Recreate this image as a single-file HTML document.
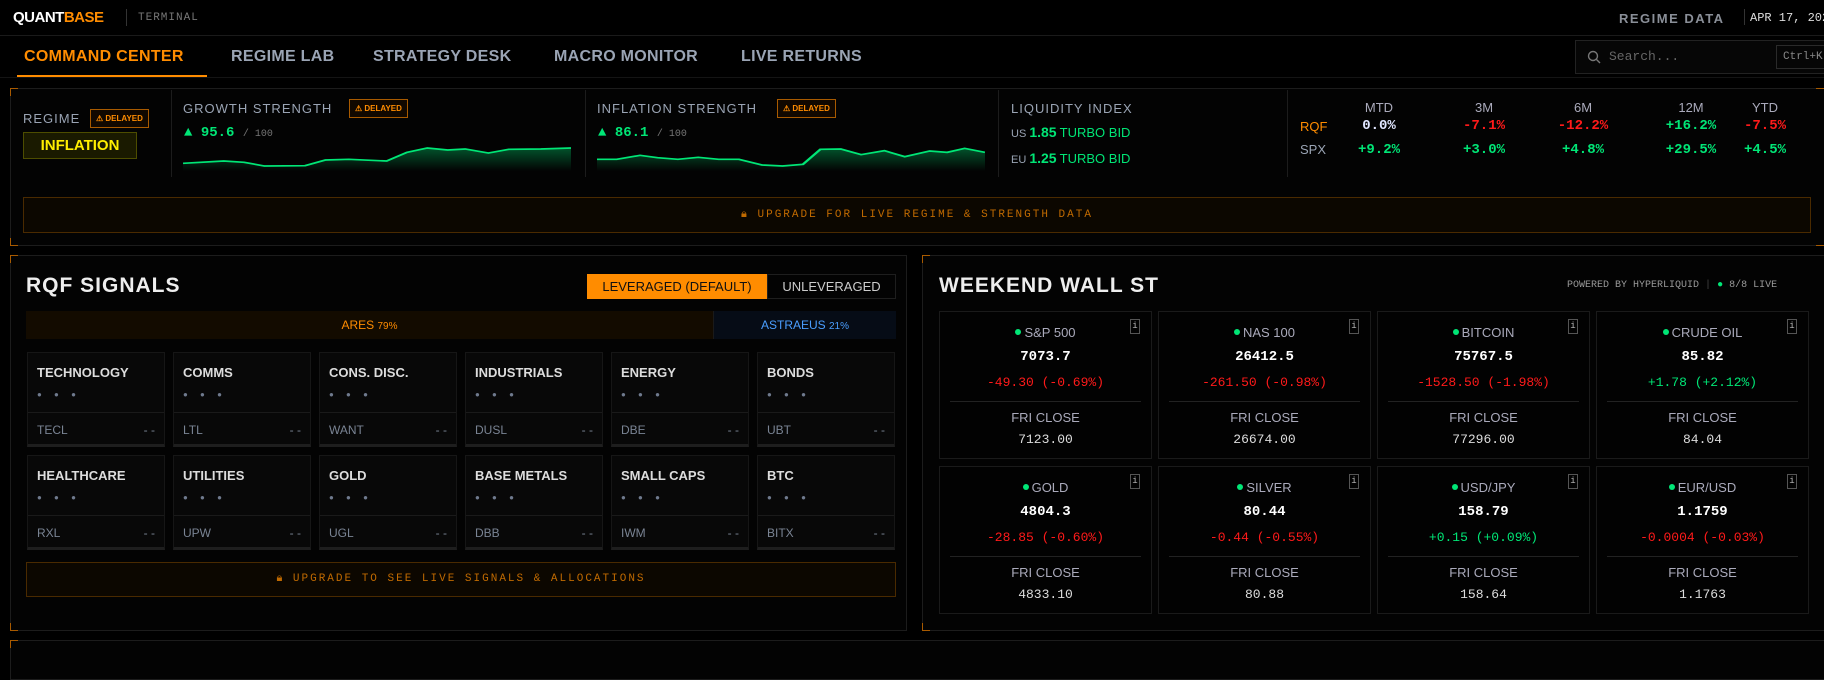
<!DOCTYPE html>
<html><head><meta charset="utf-8"><style>
*{box-sizing:border-box;margin:0;padding:0}
body{width:1824px;height:650px;overflow:hidden;background:#000;font-family:"Liberation Sans",sans-serif;color:#ddd;position:relative}
.a{position:absolute;white-space:nowrap}
.mono{font-family:"Liberation Mono",monospace}
.b{font-weight:bold}
.g{color:#00e676}.r{color:#ff1a1a}.o{color:#ff8c00}
.nav{top:48px;font-size:16px;font-weight:bold;color:#9aa4b4;letter-spacing:.3px}
.badge{border:1px solid #a85a00;color:#ff8c00;font-size:8px;font-weight:bold;padding:3px 5px;background:#110800;height:19px;line-height:12px}
.lbl{font-size:13px;color:#9aa4b4;letter-spacing:1px}
.vdiv{position:absolute;top:90px;width:1px;height:87px;background:#1c1c1c}
.panel{position:absolute;border:1px solid #1c1c1c;background:#030303}
.cor{position:absolute;width:8px;height:8px;border-color:#a85a00;border-style:solid;border-width:0}
.up{position:absolute;border:1px solid #4a2a00;background:#0c0700;color:#c06a00;font-family:"Liberation Mono",monospace;font-size:11px;letter-spacing:2px;text-align:center}
.card{position:absolute;width:138px;height:95px;background:#080808;border:1px solid #161616;border-bottom:3px solid #1e1e1e}
.card .n{position:absolute;left:9px;top:12px;font-size:13px;font-weight:bold;color:#ddd}
.card .d{position:absolute;left:9px;top:37px;font-size:8px;color:#6f7a8e;letter-spacing:5px}
.card .ln{position:absolute;left:0;right:0;top:59px;height:1px;background:#1a1a1a}
.card .t{position:absolute;left:9px;top:70px;font-size:12px;color:#7a8494}
.card .x{position:absolute;right:9px;top:70px;font-size:12px;color:#7a8494}
.wc{position:absolute;width:213px;height:148px;border:1px solid #1a1a1a;background:#020202;text-align:center}
.wc .nm{position:absolute;left:0;right:0;top:13px;font-size:13px;color:#aab}
.wc .nm:before{content:"";display:inline-block;width:6px;height:6px;border-radius:3px;background:#00e676;margin-right:3px;vertical-align:2px}
.wc .pr{position:absolute;left:0;right:0;top:37px;font-family:"Liberation Mono",monospace;font-weight:bold;font-size:14px;color:#fff}
.wc .ch{position:absolute;left:0;right:0;top:63px;font-family:"Liberation Mono",monospace;font-size:13px}
.wc .hl{position:absolute;left:10px;right:10px;top:89px;height:1px;background:#222}
.wc .fc{position:absolute;left:0;right:0;top:98px;font-size:13px;color:#aab}
.wc .fv{position:absolute;left:0;right:0;top:120px;font-family:"Liberation Mono",monospace;font-size:13px;color:#ddd}
.wc .i{position:absolute;right:11px;top:7px;width:10px;height:15px;border:1px solid #555;font-family:"Liberation Mono",monospace;font-size:9px;color:#bbb;line-height:13px}
.th{top:100px;font-size:13px;color:#aab;text-align:center;width:80px}
.td{font-family:"Liberation Mono",monospace;font-weight:bold;font-size:14px;text-align:center;width:80px}
</style></head><body>
<div class="a b" style="left:13px;top:9px;font-size:15px;letter-spacing:-.5px;color:#fff">QUANT<span class="o">BASE</span></div>
<div class="a" style="left:126px;top:9px;width:1px;height:17px;background:#333"></div>
<div class="a mono" style="left:138px;top:12px;font-size:11px;color:#777;letter-spacing:1px">TERMINAL</div>
<div class="a b" style="left:1619px;top:11px;font-size:13px;color:#8a8f98;letter-spacing:1.5px">REGIME DATA</div>
<div class="a" style="left:1744px;top:9px;width:1px;height:16px;background:#333"></div>
<div class="a mono" style="left:1750px;top:11px;font-size:12px;color:#ddd">APR 17, 2026</div>
<div class="a" style="left:0;top:35px;width:1824px;height:1px;background:#1a1a1a"></div>
<div class="a nav" style="left:24px;color:#ff8c00">COMMAND CENTER</div>
<div class="a" style="left:17px;top:75px;width:190px;height:2px;background:#ff8c00"></div>
<div class="a nav" style="left:231px">REGIME LAB</div>
<div class="a nav" style="left:373px">STRATEGY DESK</div>
<div class="a nav" style="left:554px">MACRO MONITOR</div>
<div class="a nav" style="left:741px">LIVE RETURNS</div>
<div class="a" style="left:1575px;top:40px;width:260px;height:34px;border:1px solid #222;background:#060606"></div>
<svg class="a" style="left:1587px;top:50px" width="14" height="14" viewBox="0 0 14 14"><circle cx="6" cy="6" r="4.5" fill="none" stroke="#777" stroke-width="1.4"/><path d="M9.5 9.5L13 13" stroke="#777" stroke-width="1.4"/></svg>
<div class="a mono" style="left:1609px;top:49px;font-size:13px;color:#666">Search...</div>
<div class="a mono" style="left:1776px;top:45px;width:60px;height:24px;border:1px solid #2a2a2a;font-size:11px;color:#888;padding:5px 6px">Ctrl+K</div>
<div class="a" style="left:0;top:77px;width:1824px;height:1px;background:#141414"></div>

<div class="panel" style="left:10px;top:88px;width:1830px;height:158px"></div>
<div class="cor" style="left:10px;top:88px;border-left-width:1px;border-top-width:1px"></div>
<div class="cor" style="left:10px;top:238px;border-left-width:1px;border-bottom-width:1px"></div>
<div class="cor" style="left:1816px;top:88px;border-top-width:1px"></div>
<div class="cor" style="left:1816px;top:238px;border-bottom-width:1px"></div>
<div class="a lbl" style="left:23px;top:111px">REGIME</div>
<div class="a badge" style="left:90px;top:109px">⚠ DELAYED</div>
<div class="a b" style="left:23px;top:132px;width:114px;height:27px;background:#1a1a00;border:1px solid #4d4d00;color:#ffee00;font-size:15px;text-align:center;line-height:25px">INFLATION</div>
<div class="vdiv" style="left:171px"></div>
<div class="a lbl" style="left:183px;top:101px">GROWTH STRENGTH</div>
<div class="a badge" style="left:349px;top:99px">⚠ DELAYED</div>
<div class="a mono" style="left:184px;top:125px;font-size:14px"><span class="g">▲ <b>95.6</b></span> <span style="color:#777;font-size:10px">/ 100</span></div>
<svg class="a" style="left:183px;top:145px" width="388" height="26" viewBox="315 440 667 78" preserveAspectRatio="none"><defs><linearGradient id="gg" x1="0" y1="0" x2="0" y2="1"><stop offset="0" stop-color="#00e676" stop-opacity=".35"/><stop offset="1" stop-color="#00e676" stop-opacity="0"/></linearGradient></defs><path d="M315 495L385 488L420 492L455 503L525 502L560 485L600 483L665 488L700 462L735 449L770 455L800 452L840 464L875 453L930 452L982 449L982 518L315 518Z" fill="url(#gg)"/><path d="M315 495L385 488L420 492L455 503L525 502L560 485L600 483L665 488L700 462L735 449L770 455L800 452L840 464L875 453L930 452L982 449" fill="none" stroke="#00e676" stroke-width="5"/></svg>
<div class="vdiv" style="left:585px"></div>
<div class="a lbl" style="left:597px;top:101px">INFLATION STRENGTH</div>
<div class="a badge" style="left:777px;top:99px">⚠ DELAYED</div>
<div class="a mono" style="left:598px;top:125px;font-size:14px"><span class="g">▲ <b>86.1</b></span> <span style="color:#777;font-size:10px">/ 100</span></div>
<svg class="a" style="left:597px;top:145px" width="388" height="26" viewBox="1026 440 667 78" preserveAspectRatio="none"><path d="M1026 483L1060 483L1100 471L1130 478L1165 483L1200 477L1235 483L1270 483L1310 500L1345 503L1380 498L1410 453L1445 452L1480 469L1520 457L1555 475L1598 458L1628 462L1658 450L1693 462L1693 518L1026 518Z" fill="url(#gg)"/><path d="M1026 483L1060 483L1100 471L1130 478L1165 483L1200 477L1235 483L1270 483L1310 500L1345 503L1380 498L1410 453L1445 452L1480 469L1520 457L1555 475L1598 458L1628 462L1658 450L1693 462" fill="none" stroke="#00e676" stroke-width="5"/></svg>
<div class="vdiv" style="left:998px"></div>
<div class="a lbl" style="left:1011px;top:101px">LIQUIDITY INDEX</div>
<div class="a" style="left:1011px;top:124px;font-size:11px;color:#9aa4b4">US <span class="g b" style="font-size:14px">1.85</span> <span class="g" style="font-size:13px">TURBO BID</span></div>
<div class="a" style="left:1011px;top:150px;font-size:11px;color:#9aa4b4">EU <span class="g b" style="font-size:14px">1.25</span> <span class="g" style="font-size:13px">TURBO BID</span></div>
<div class="vdiv" style="left:1287px"></div>
<div class="a th" style="left:1339px">MTD</div><div class="a th" style="left:1444px">3M</div><div class="a th" style="left:1543px">6M</div><div class="a th" style="left:1651px">12M</div><div class="a th" style="left:1725px">YTD</div>
<div class="a" style="left:1300px;top:119px;font-size:13px;color:#ff8c00">RQF</div>
<div class="a" style="left:1300px;top:142px;font-size:13px;color:#9aa4b4">SPX</div>
<div class="a td" style="left:1339px;top:118px;color:#e0e6ff">0.0%</div><div class="a td r" style="left:1444px;top:118px">-7.1%</div><div class="a td r" style="left:1543px;top:118px">-12.2%</div><div class="a td g" style="left:1651px;top:118px">+16.2%</div><div class="a td r" style="left:1725px;top:118px">-7.5%</div>
<div class="a td g" style="left:1339px;top:142px">+9.2%</div><div class="a td g" style="left:1444px;top:142px">+3.0%</div><div class="a td g" style="left:1543px;top:142px">+4.8%</div><div class="a td g" style="left:1651px;top:142px">+29.5%</div><div class="a td g" style="left:1725px;top:142px">+4.5%</div>
<div class="up" style="left:23px;top:197px;width:1788px;height:36px;line-height:34px">🔒︎ UPGRADE FOR LIVE REGIME &amp; STRENGTH DATA</div>

<div class="panel" style="left:10px;top:255px;width:897px;height:376px"></div>
<div class="cor" style="left:10px;top:255px;border-left-width:1px;border-top-width:1px"></div>
<div class="cor" style="left:10px;top:623px;border-left-width:1px;border-bottom-width:1px"></div>
<div class="a b" style="left:26px;top:274px;font-size:21px;color:#eee;letter-spacing:1px">RQF SIGNALS</div>
<div class="a" style="left:587px;top:274px;width:180px;height:25px;background:#ff8c00;color:#111;font-size:13px;text-align:center;line-height:25px">LEVERAGED (DEFAULT)</div>
<div class="a" style="left:767px;top:274px;width:129px;height:25px;border:1px solid #1e1e1e;color:#ccc;font-size:13px;text-align:center;line-height:23px">UNLEVERAGED</div>
<div class="a" style="left:26px;top:311px;width:687px;height:28px;background:#130b00;color:#ff8c00;font-size:12px;text-align:center;line-height:28px">ARES <span style="font-size:10px">79%</span></div>
<div class="a" style="left:713px;top:311px;width:183px;height:28px;background:#060c16;color:#4a9eff;font-size:12px;text-align:center;line-height:28px;border-left:1px solid #1a1a1a">ASTRAEUS <span style="font-size:10px">21%</span></div>
<div class="card" style="left:27px;top:352px"><div class="n">TECHNOLOGY</div><div class="d">● ● ●</div><div class="ln"></div><div class="t">TECL</div><div class="x">- -</div></div>
<div class="card" style="left:173px;top:352px"><div class="n">COMMS</div><div class="d">● ● ●</div><div class="ln"></div><div class="t">LTL</div><div class="x">- -</div></div>
<div class="card" style="left:319px;top:352px"><div class="n">CONS. DISC.</div><div class="d">● ● ●</div><div class="ln"></div><div class="t">WANT</div><div class="x">- -</div></div>
<div class="card" style="left:465px;top:352px"><div class="n">INDUSTRIALS</div><div class="d">● ● ●</div><div class="ln"></div><div class="t">DUSL</div><div class="x">- -</div></div>
<div class="card" style="left:611px;top:352px"><div class="n">ENERGY</div><div class="d">● ● ●</div><div class="ln"></div><div class="t">DBE</div><div class="x">- -</div></div>
<div class="card" style="left:757px;top:352px"><div class="n">BONDS</div><div class="d">● ● ●</div><div class="ln"></div><div class="t">UBT</div><div class="x">- -</div></div>
<div class="card" style="left:27px;top:455px"><div class="n">HEALTHCARE</div><div class="d">● ● ●</div><div class="ln"></div><div class="t">RXL</div><div class="x">- -</div></div>
<div class="card" style="left:173px;top:455px"><div class="n">UTILITIES</div><div class="d">● ● ●</div><div class="ln"></div><div class="t">UPW</div><div class="x">- -</div></div>
<div class="card" style="left:319px;top:455px"><div class="n">GOLD</div><div class="d">● ● ●</div><div class="ln"></div><div class="t">UGL</div><div class="x">- -</div></div>
<div class="card" style="left:465px;top:455px"><div class="n">BASE METALS</div><div class="d">● ● ●</div><div class="ln"></div><div class="t">DBB</div><div class="x">- -</div></div>
<div class="card" style="left:611px;top:455px"><div class="n">SMALL CAPS</div><div class="d">● ● ●</div><div class="ln"></div><div class="t">IWM</div><div class="x">- -</div></div>
<div class="card" style="left:757px;top:455px"><div class="n">BTC</div><div class="d">● ● ●</div><div class="ln"></div><div class="t">BITX</div><div class="x">- -</div></div>
<div class="up" style="left:26px;top:562px;width:870px;height:35px;line-height:33px">🔒︎ UPGRADE TO SEE LIVE SIGNALS &amp; ALLOCATIONS</div>

<div class="panel" style="left:922px;top:255px;width:920px;height:376px"></div>
<div class="cor" style="left:922px;top:255px;border-left-width:1px;border-top-width:1px"></div>
<div class="cor" style="left:922px;top:623px;border-left-width:1px;border-bottom-width:1px"></div>
<div class="a b" style="left:939px;top:274px;font-size:21px;color:#eee;letter-spacing:1px">WEEKEND WALL ST</div>
<div class="a mono" style="left:1567px;top:280px;font-size:10px;color:#999">POWERED BY HYPERLIQUID <span style="color:#444">|</span> <span class="g">●</span> 8/8 LIVE</div>
<div class="wc" style="left:939px;top:311px"><div class="i">i</div><div class="nm">S&amp;P 500</div><div class="pr">7073.7</div><div class="ch r">-49.30 (-0.69%)</div><div class="hl"></div><div class="fc">FRI CLOSE</div><div class="fv">7123.00</div></div>
<div class="wc" style="left:1158px;top:311px"><div class="i">i</div><div class="nm">NAS 100</div><div class="pr">26412.5</div><div class="ch r">-261.50 (-0.98%)</div><div class="hl"></div><div class="fc">FRI CLOSE</div><div class="fv">26674.00</div></div>
<div class="wc" style="left:1377px;top:311px"><div class="i">i</div><div class="nm">BITCOIN</div><div class="pr">75767.5</div><div class="ch r">-1528.50 (-1.98%)</div><div class="hl"></div><div class="fc">FRI CLOSE</div><div class="fv">77296.00</div></div>
<div class="wc" style="left:1596px;top:311px"><div class="i">i</div><div class="nm">CRUDE OIL</div><div class="pr">85.82</div><div class="ch g">+1.78 (+2.12%)</div><div class="hl"></div><div class="fc">FRI CLOSE</div><div class="fv">84.04</div></div>
<div class="wc" style="left:939px;top:466px"><div class="i">i</div><div class="nm">GOLD</div><div class="pr">4804.3</div><div class="ch r">-28.85 (-0.60%)</div><div class="hl"></div><div class="fc">FRI CLOSE</div><div class="fv">4833.10</div></div>
<div class="wc" style="left:1158px;top:466px"><div class="i">i</div><div class="nm">SILVER</div><div class="pr">80.44</div><div class="ch r">-0.44 (-0.55%)</div><div class="hl"></div><div class="fc">FRI CLOSE</div><div class="fv">80.88</div></div>
<div class="wc" style="left:1377px;top:466px"><div class="i">i</div><div class="nm">USD/JPY</div><div class="pr">158.79</div><div class="ch g">+0.15 (+0.09%)</div><div class="hl"></div><div class="fc">FRI CLOSE</div><div class="fv">158.64</div></div>
<div class="wc" style="left:1596px;top:466px"><div class="i">i</div><div class="nm">EUR/USD</div><div class="pr">1.1759</div><div class="ch r">-0.0004 (-0.03%)</div><div class="hl"></div><div class="fc">FRI CLOSE</div><div class="fv">1.1763</div></div>

<div class="panel" style="left:10px;top:640px;width:1830px;height:40px"></div>
<div class="cor" style="left:10px;top:640px;border-left-width:1px;border-top-width:1px"></div>
</body></html>
